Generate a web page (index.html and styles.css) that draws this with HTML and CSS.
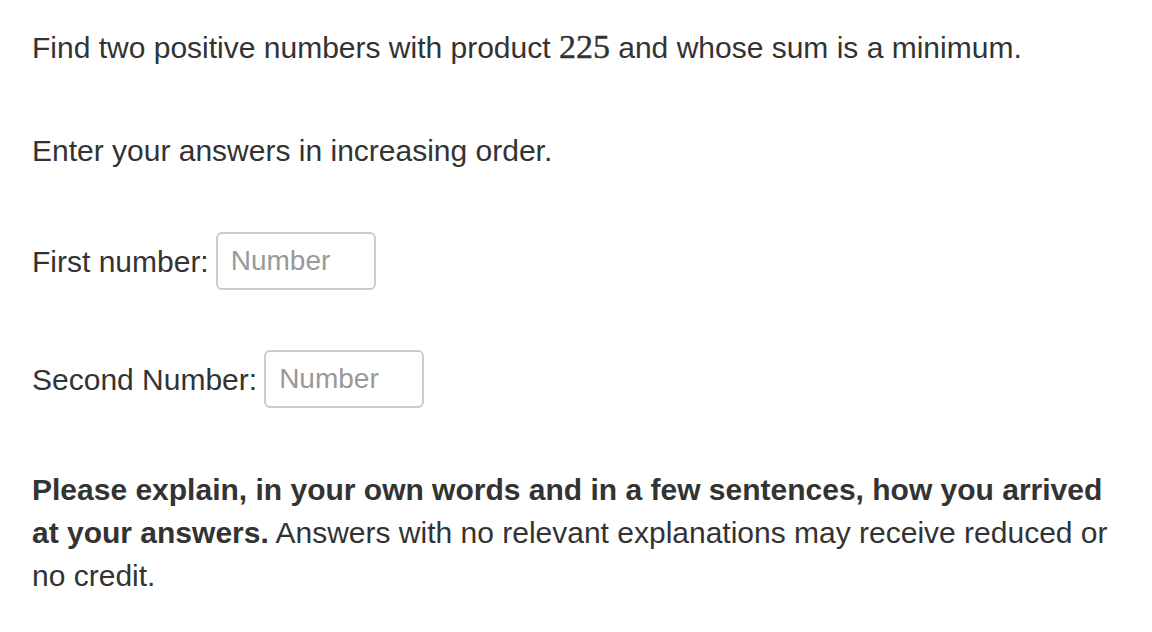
FILE: index.html
```html
<!DOCTYPE html>
<html>
<head>
<meta charset="utf-8">
<link rel="stylesheet" href="styles.css">
</head>
<body>
<div class="question">
  <p class="line">Find two positive numbers with product <span class="math">225</span> and whose sum is a minimum.</p>
  <p class="line">Enter your answers in increasing order.</p>
  <div class="field"><label>First number:</label><input class="num" type="text" placeholder="Number"></div>
  <div class="field"><label>Second Number:</label><input class="num" type="text" placeholder="Number"></div>
  <p class="line"><strong>Please explain, in your own words and in a few sentences, how you arrived at your answers.</strong> Answers with no relevant explanations may receive reduced or no credit.</p>
</div>
</body>
</html>
```
FILE: styles.css
```css
html, body {
  margin: 0;
  padding: 0;
  background: #fff;
}
body {
  font-family: "Liberation Sans", Arial, sans-serif;
  font-size: 30px;
  color: #333;
  line-height: 43px;
}
.question {
  display: flex;
  flex-direction: column;
  gap: 60px;
  padding: 26px 30px 0 32px;
}
.line {
  margin: 0;
}
.math {
  font-family: "Liberation Serif", "DejaVu Serif", serif;
  font-size: 34px;
  line-height: 0;
  -webkit-text-stroke: 0.4px #333;
}
strong {
  font-weight: bold;
}
.field {
  display: flex;
  align-items: center;
  gap: 7px;
  height: 58px;
}
.num {
  box-sizing: border-box;
  width: 160px;
  height: 58px;
  border: 2px solid #ccc;
  border-radius: 6px;
  padding: 0 13px;
  font-family: "Liberation Sans", Arial, sans-serif;
  font-size: 28px;
  color: #333;
  outline: none;
}
.num::placeholder {
  color: #999;
}
```
